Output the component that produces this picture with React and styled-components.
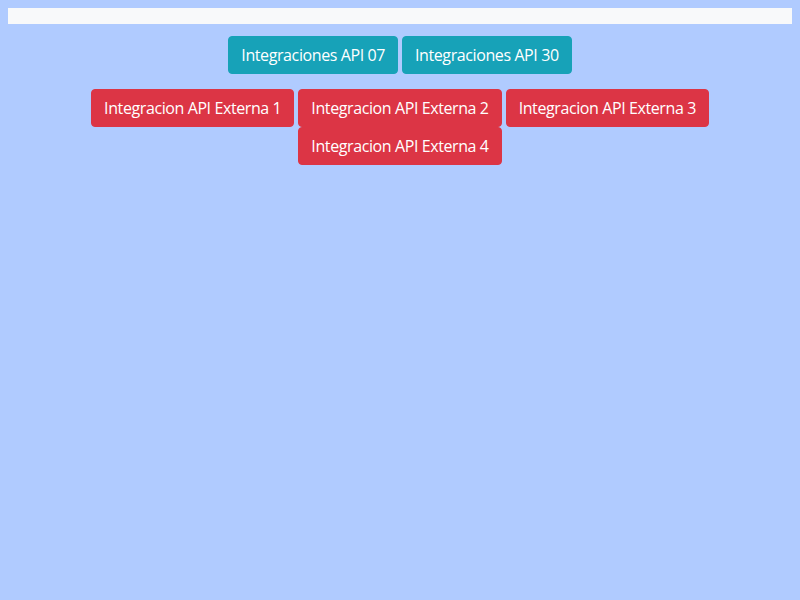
import React from 'react';
import styled, { createGlobalStyle } from 'styled-components';

const GlobalStyle = createGlobalStyle`
  html, body {
    background-color: #b0cbff;
  }
  body {
    margin: 8px;
    font-family: "Open Sans", "Noto Sans", sans-serif;
  }
`

const TopBar = styled.div`
  height: 16px;
  background-color: #f8f9fa;
`

const ButtonRow = styled.div`
  display: flex;
  flex-wrap: wrap;
  justify-content: center;
  gap: 0 4px;
  margin-top: ${props => props.top}px;
`

const Button = styled.button`
  font-family: inherit;
  font-size: 16px;
  line-height: 24px;
  letter-spacing: -0.4px;
  font-weight: 400;
  padding: 6px 12px;
  border: 1px solid ${props => props.color};
  border-radius: 4px;
  background-color: ${props => props.color};
  color: #fff;
  cursor: pointer;
`

const INFO = '#17a2b8'
const DANGER = '#dc3545'

const App = () => {
  return (
    <>
      <GlobalStyle />
      <TopBar />
      <ButtonRow top={12}>
        <Button color={INFO}>Integraciones API 07</Button>
        <Button color={INFO}>Integraciones API 30</Button>
      </ButtonRow>
      <ButtonRow top={15}>
        <Button color={DANGER}>Integracion API Externa 1</Button>
        <Button color={DANGER}>Integracion API Externa 2</Button>
        <Button color={DANGER}>Integracion API Externa 3</Button>
        <Button color={DANGER}>Integracion API Externa 4</Button>
      </ButtonRow>
    </>
  )
}

export default App;
